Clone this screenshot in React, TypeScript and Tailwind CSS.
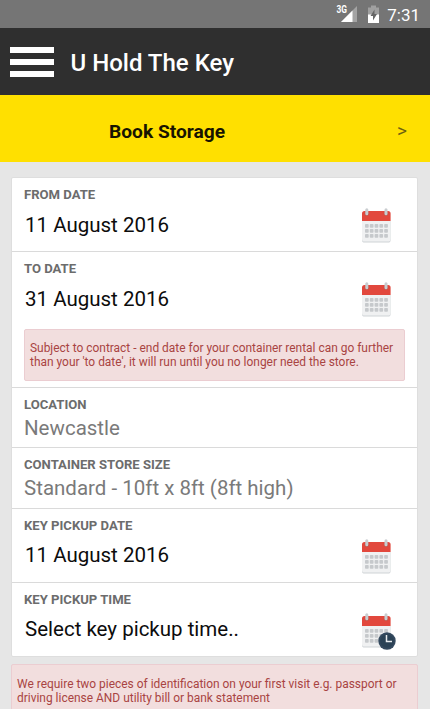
import React from 'react';

function Calendar({ clock = false }: { clock?: boolean }) {
  return (
    <svg width="36" height="40" viewBox="0 0 36 40" className="shrink-0">
      <path d="M2 13h28.6v19a2.6 2.6 0 0 1-2.6 2.6H4.600A2.600 2.600 0 0 1 2 32z" fill="#cfd3d6" />
      <path d="M2 13h28.6v18a2.600 2.600 0 0 1-2.600 2.600H4.600A2.600 2.600 0 0 1 2 31z" fill="#f0f1f2" />
      <path d="M2 13V5.500A2.500 2.500 0 0 1 4.500 3h23.600a2.500 2.500 0 0 1 2.500 2.500V13z" fill="#e2483d" />
      {[16, 21, 26].map((y) =>
        [5, 9.8, 14.6, 19.4, 24.2].map((x) => (
          <rect key={`${x}-${y}`} x={x} y={y} width="3.700" height="3.700" rx="0.800" fill="#c6c9cc" />
        )),
      )}
      {[6.8, 26].map((x) => (
        <g key={x}>
          <circle cx={x} cy="5.800" r="2.300" fill="#c0554c" />
          <rect x={x - 1.5} y="0.300" width="3" height="7" rx="1.500" fill="#c9cdd0" />
        </g>
      ))}
      {clock && (
        <g>
          <circle cx="27" cy="28" r="8.700" fill="#34495e" />
          <circle cx="27" cy="28" r="6.800" fill="#2b4255" />
          <path d="M26.500 22v6.500h5.500" fill="none" stroke="#e8ecef" strokeWidth="1.500" />
        </g>
      )}
    </svg>
  );
}

function Label({ children }: { children: React.ReactNode }) {
  return <div className="text-[13.100px] leading-4 font-bold whitespace-nowrap text-[#6c6c6c]">{children}</div>;
}

function PickerRow({ label, value, clock = false }: { label: string; value: string; clock?: boolean }) {
  return (
    <div className="flex h-[74px] justify-between pt-[9px] pr-[21px] pl-3 last:h-[73px]">
      <div>
        <Label>{label}</Label>
        <div className={`ml-px text-[20.500px] leading-7 whitespace-nowrap text-[#0c0c0c] ${label.startsWith('KEY') ? 'mt-[7px]' : 'mt-2'}`}>{value}</div>
      </div>
      <div className="pt-[21px]">
        <Calendar clock={clock} />
      </div>
    </div>
  );
}

function InfoRow({ label, value }: { label: string; value: string }) {
  return (
    <div className="pt-[9px] pl-3">
      <Label>{label}</Label>
      <div className="mt-px text-[20.500px] leading-7 whitespace-nowrap text-[#7a7a7a]">{value}</div>
    </div>
  );
}

export default function App() {
  return (
    <div className="flex h-[709px] w-[430px] flex-col overflow-hidden bg-[#e6e6e6] font-['Roboto',sans-serif]">
      <div className="flex h-7 shrink-0 items-center justify-end bg-[#757575] pr-[10px] text-white">
        <svg width="45" height="28" viewBox="0 0 45 28" className="mr-[6px]">
          <text x="0.500" y="13" fontSize="10" fontWeight="700" textLength="10.500" lengthAdjust="spacingAndGlyphs" fill="#fff">3G</text>
          <path d="M21 6v16H5z" fill="#a3a3a3" />
          <path d="M16.500 10.500V22H5z" fill="#fff" />
          <path d="M35 5.500h5v2h3V23H32V7.500h3z" fill="#a0a0a0" />
          <path d="M32 14.500h11V23H32z" fill="#fff" />
          <path d="M38.500 9.500l-4 6.500h2.500v4.500l4-6.500h-2.500z" fill="#666" />
        </svg>
        <span className="pt-[2px] text-[17px] leading-6">7:31</span>
      </div>

      <header className="flex h-[67px] shrink-0 items-center bg-[#2f2f2f] pl-[10px]">
        <div className="flex flex-col gap-[6px] pt-px">
          <div className="h-[6px] w-11 bg-white" />
          <div className="h-[6px] w-11 bg-white" />
          <div className="h-[6px] w-11 bg-white" />
        </div>
        <h1 className="ml-[16.500px] pt-[3px] text-[24px] leading-7 font-medium text-white">U Hold The Key</h1>
      </header>

      <div className="flex h-[67px] shrink-0 items-center justify-between bg-[#ffe000] pt-[6px] pr-[23px] pl-[109px]">
        <div className="pt-px text-[19.200px] leading-6 font-bold text-[#181400]">Book Storage</div>
        <div className="pb-[2px] text-[19px] leading-6 text-[#6d6010]">&gt;</div>
      </div>

      <main className="mt-[15px] mr-3 ml-[11px] flex flex-col">
        <section className="flex flex-col divide-y divide-[#dadada] rounded-[2px] border border-[#dedede] bg-white">
          <PickerRow label="FROM DATE" value="11 August 2016" />
          <div className="h-[136px]">
            <PickerRow label="TO DATE" value="31 August 2016" />
            <div className="mx-3 mt-[3px] h-[52px] rounded-[2px] border border-[#ebcdd1] bg-[#f2dede] pt-[11px] pl-[5px] text-[11.940px] leading-[14px] whitespace-nowrap text-[#a94442]">
              Subject to contract - end date for your container rental can go further
              <br />
              than your 'to date', it will run until you no longer need the store.
            </div>
          </div>
          <div className="h-[60px]"><InfoRow label="LOCATION" value="Newcastle" /></div>
          <div className="h-[61px]"><InfoRow label="CONTAINER STORE SIZE" value="Standard - 10ft x 8ft (8ft high)" /></div>
          <PickerRow label="KEY PICKUP DATE" value="11 August 2016" />
          <PickerRow label="KEY PICKUP TIME" value="Select key pickup time.." clock />
        </section>
        <div className="mt-[7px] h-[60px] rounded-[2px] border border-[#ebcdd1] bg-[#f2dede] pt-[12px] pl-[5px] text-[11.940px] leading-[14px] whitespace-nowrap text-[#a94442]">
          We require two pieces of identification on your first visit e.g. passport or
          <br />
          driving license AND utility bill or bank statement
        </div>
      </main>
    </div>
  );
}
